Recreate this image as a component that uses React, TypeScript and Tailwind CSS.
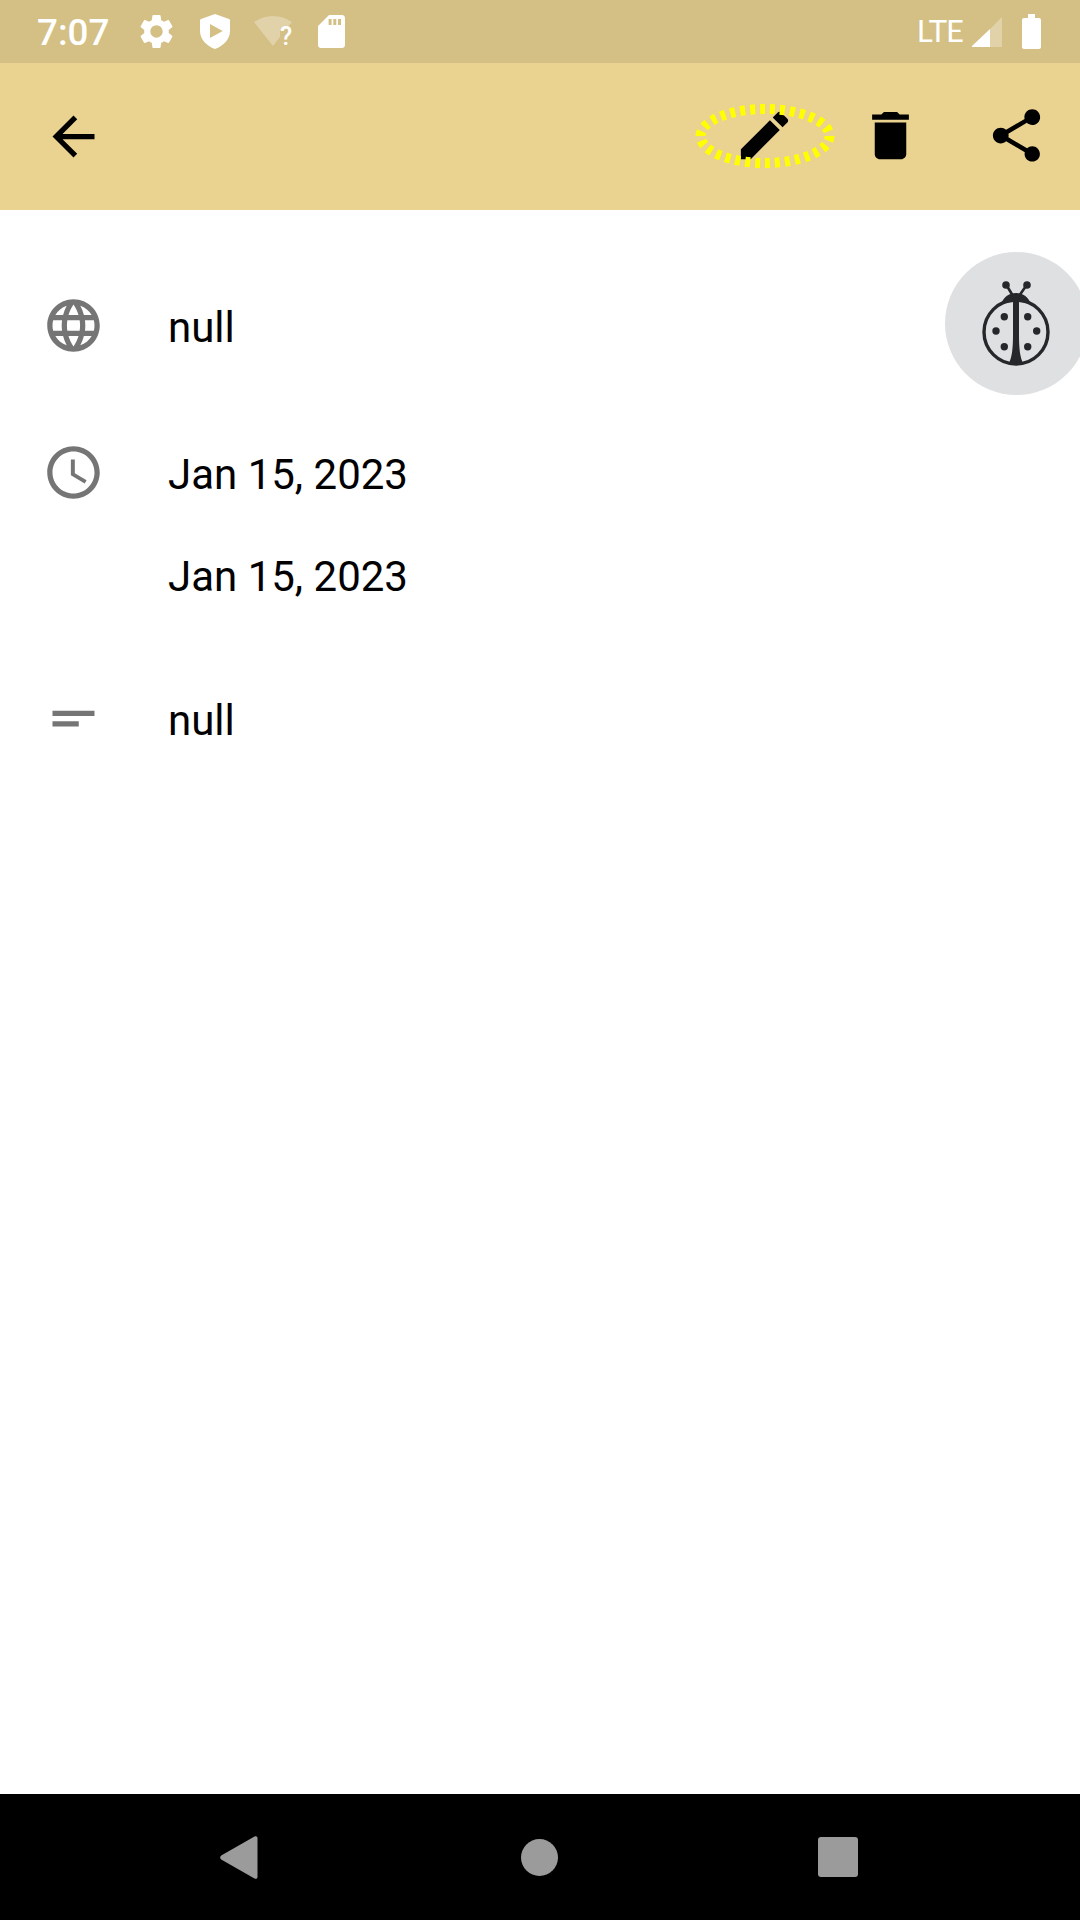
const GRAY = "#757575";

function MI({ d, size = 63, fill = "#000" }: { d: string; size?: number; fill?: string }) {
  return (
    <svg width={size} height={size} viewBox="0 0 24 24" fill={fill} className="block shrink-0">
      <path d={d} />
    </svg>
  );
}

const P = {
  back: "M20 11H7.83l5.59-5.59L12 4l-8 8 8 8 1.41-1.41L7.83 13H20v-2z",
  edit: "M3 17.25V21h3.75L17.81 9.94l-3.75-3.75L3 17.25zM20.71 7.04c.39-.39.39-1.02 0-1.41l-2.34-2.34c-.39-.39-1.02-.39-1.41 0l-1.83 1.83 3.75 3.75 1.83-1.83z",
  trash: "M6 19c0 1.1.9 2 2 2h8c1.1 0 2-.9 2-2V7H6v12zM19 4h-3.5l-1-1h-5l-1 1H5v2h14V4z",
  share: "M18 16.08c-.76 0-1.44.3-1.96.77L8.91 12.7c.05-.23.09-.46.09-.7s-.04-.47-.09-.7l7.05-4.11c.54.5 1.25.81 2.04.81 1.66 0 3-1.34 3-3s-1.34-3-3-3-3 1.34-3 3c0 .24.04.47.09.7L8.04 9.81C7.5 9.31 6.79 9 6 9c-1.66 0-3 1.34-3 3s1.34 3 3 3c.79 0 1.5-.31 2.04-.81l7.12 4.16c-.05.21-.08.43-.08.65 0 1.61 1.31 2.92 2.92 2.92 1.61 0 2.92-1.31 2.92-2.92s-1.31-2.92-2.92-2.92z",
  globe: "M11.99 2C6.47 2 2 6.48 2 12s4.47 10 9.99 10C17.52 22 22 17.52 22 12S17.52 2 11.99 2zm6.93 6h-2.95c-.32-1.25-.78-2.45-1.38-3.56 1.84.63 3.37 1.91 4.33 3.56zM12 4.04c.83 1.2 1.48 2.53 1.91 3.96h-3.82c.43-1.43 1.08-2.76 1.91-3.96zM4.26 14C4.1 13.36 4 12.69 4 12s.1-1.36.26-2h3.38c-.08.66-.14 1.32-.14 2 0 .68.06 1.34.14 2H4.26zm.82 2h2.95c.32 1.25.78 2.45 1.38 3.56-1.84-.63-3.37-1.9-4.33-3.56zm2.95-8H5.08c.96-1.66 2.49-2.93 4.33-3.56C8.81 5.55 8.35 6.75 8.03 8zM12 19.96c-.83-1.2-1.48-2.53-1.91-3.96h3.82c-.43 1.43-1.08 2.76-1.91 3.96zM14.34 14H9.66c-.09-.66-.16-1.32-.16-2 0-.68.07-1.35.16-2h4.68c.09.65.16 1.32.16 2 0 .68-.07 1.34-.16 2zm.25 5.56c.6-1.11 1.06-2.31 1.38-3.56h2.95c-.96 1.65-2.49 2.93-4.33 3.56zM16.36 14c.08-.66.14-1.32.14-2 0-.68-.06-1.34-.14-2h3.38c.16.64.26 1.31.26 2s-.1 1.36-.26 2h-3.38z",
  clock: "M11.99 2C6.47 2 2 6.48 2 12s4.47 10 9.99 10C17.52 22 22 17.52 22 12S17.52 2 11.99 2zM12 20c-4.42 0-8-3.58-8-8s3.58-8 8-8 8 3.58 8 8-3.58 8-8 8zm.5-13H11v6l5.25 3.15.75-1.23-4.5-2.67z",
  subject: "M4 9h16v2H4zm0 4h10v2H4z",
  gear: "M19.14 12.94c.04-.3.06-.61.06-.94 0-.32-.02-.64-.07-.94l2.03-1.58c.18-.14.23-.41.12-.61l-1.92-3.32c-.12-.22-.37-.29-.59-.22l-2.39.96c-.5-.38-1.03-.7-1.62-.94l-.36-2.54c-.04-.24-.24-.41-.48-.41h-3.84c-.24 0-.43.17-.47.41l-.36 2.54c-.59.24-1.13.57-1.62.94l-2.39-.96c-.22-.08-.47 0-.59.22L2.74 8.87c-.12.21-.08.47.12.61l2.03 1.58c-.05.3-.09.63-.09.94s.02.64.07.94l-2.03 1.58c-.18.14-.23.41-.12.61l1.92 3.32c.12.22.37.29.59.22l2.39-.96c.5.38 1.03.7 1.62.94l.36 2.54c.05.24.24.41.48.41h3.84c.24 0 .44-.17.47-.41l.36-2.54c.59-.24 1.13-.56 1.62-.94l2.39.96c.22.08.47 0 .59-.22l1.92-3.32c.12-.22.07-.47-.12-.61l-2.01-1.58zM12 15.6c-1.98 0-3.6-1.62-3.6-3.6s1.62-3.6 3.6-3.6 3.6 1.62 3.6 3.6-1.62 3.6-3.6 3.6z",
};

function StatusBar() {
  return (
    <div className="h-[63px] bg-[#d4bf84] flex items-center shrink-0 relative text-white">
      <span className="ml-[37px] pt-[4px] text-[36.75px] leading-none font-medium font-['Roboto',sans-serif] w-[72px] whitespace-nowrap">7:07</span>
      <div className="ml-[27px]"><MI d={P.gear} size={41} fill="#fff" /></div>
      <svg width="30" height="35" viewBox="0 0 30 35" className="ml-[23px] block shrink-0">
        <path fill="#fff" fillRule="evenodd" d="M15 0 L29 5 C29.6 5.2 30 5.8 30 6.5 V17 C30 25 23.5 32 15 35 C6.5 32 0 25 0 17 V6.5 C0 5.8 0.4 5.2 1 5 Z M10 10 V24 L22.7 17 Z" />
      </svg>
      <svg width="42" height="32" viewBox="0 0 42 32" className="ml-[24px] block shrink-0 overflow-visible">
        <path fill="#fff" fillOpacity="0.3" d="M0 6 C6 2 12 0 19 0 C26 0 32 2 38 6 L31 14 H26 V21 L19 30 Z" />
        <text x="26" y="29" fill="#fff" fontSize="25" fontWeight="500" fontFamily="Roboto, sans-serif">?</text>
      </svg>
      <svg width="27" height="33" viewBox="0 0 27 33" className="ml-[22px] block shrink-0">
        <path fill="#fff" fillRule="evenodd" d="M11 0 H24 C25.7 0 27 1.3 27 3 V30 C27 31.7 25.7 33 24 33 H3 C1.3 33 0 31.7 0 30 V11 Z M10.6 4 V10 H13.6 V4 Z M15.3 4 V10 H18.3 V4 Z M20 4 V10 H23 V4 Z" />
      </svg>
      <div className="ml-auto flex items-center">
        <span className="text-[31px] pb-[2px] leading-none font-['Lato',sans-serif] font-normal tracking-[-1px]">LTE</span>
        <svg width="32" height="32" viewBox="0 0 32 32" className="ml-[8px] block shrink-0">
          <path fill="#fff" fillOpacity="0.3" d="M31 1 V30 C31 30.6 30.6 31 30 31 H19 V13 Z" />
          <path fill="#fff" d="M19 13 V31 H1.5 C1 31 0.5 30.5 1 30 Z" />
        </svg>
        <svg width="19" height="35" viewBox="0 0 19 35" className="ml-[19px] mr-[39px] block shrink-0">
          <path fill="#fff" d="M6 0 H13 V4 H17 C18.1 4 19 4.9 19 6 V33 C19 34.1 18.1 35 17 35 H2 C0.9 35 0 34.1 0 33 V6 C0 4.9 0.9 4 2 4 H6 Z" />
        </svg>
      </div>
    </div>
  );
}

function Toolbar() {
  return (
    <div className="h-[147px] bg-[#ead290] flex items-center shrink-0 pr-[1px] pl-[11px] pb-[2px]">
      <button className="w-[126px] h-[126px] flex items-center justify-center pt-[2px] pr-[2px]"><MI d={P.back} /></button>
      <div className="flex-1" />
      <button className="w-[126px] h-[126px] flex items-center justify-center relative">
        <MI d={P.edit} />
        <svg width="144" height="72" viewBox="0 0 144 72" className="absolute left-[-8.5px] top-[27.5px] pointer-events-none">
          <ellipse cx="72" cy="36" rx="64.5" ry="27" fill="none" stroke="#ffff00" strokeWidth="10" strokeDasharray="5 5" pathLength={300} />
        </svg>
      </button>
      <button className="w-[126px] h-[126px] flex items-center justify-center"><MI d={P.trash} /></button>
      <button className="w-[126px] h-[126px] flex items-center justify-center"><MI d={P.share} /></button>
    </div>
  );
}

function Row({ icon, lines, className }: { icon: string; lines: string[]; className?: string }) {
  return (
    <div className={"flex items-start pl-[42px] " + (className ?? "")}>
      <div className="w-[126px] shrink-0"><MI d={icon} fill={GRAY} /></div>
      <div className="flex flex-col gap-[42px]">
        {lines.map((l, i) => (
          <div key={i} className="h-[60px] pt-[7px] flex items-center text-[42px] leading-none text-black font-['Roboto',sans-serif]">{l}</div>
        ))}
      </div>
    </div>
  );
}

function Ladybug() {
  return (
    <div className="absolute left-[945px] top-[252px] w-[143px] h-[143px] rounded-full bg-[#dfe0e2] flex items-center justify-center">
      <svg width="80" height="90" viewBox="0 0 80 90" className="block ml-[-1px] mt-[3px]">
        <g fill="#25272a">
          <path d="M25 25 C27 17 33 13 40 13 C47 13 53 17 55 25 C50 21 30 21 25 25 Z" />
          <path d="M37 16 L31 6 M43 16 L50 6" stroke="#25272a" strokeWidth="2.6" fill="none" />
          <circle cx="30" cy="5" r="3.8" />
          <circle cx="51" cy="5" r="3.8" />
          <path d="M37 20 H43 V55 C43 68 44 78 47.5 84 H32.5 C36 78 37 68 37 55 Z" />
          <circle cx="28.3" cy="36.7" r="3.7" />
          <circle cx="51.7" cy="36.7" r="3.7" />
          <circle cx="20" cy="51" r="3.7" />
          <circle cx="60.7" cy="51" r="3.7" />
          <circle cx="28.3" cy="66.7" r="3.7" />
          <circle cx="51.7" cy="66.7" r="3.7" />
        </g>
        <circle cx="40" cy="52" r="32" fill="none" stroke="#25272a" strokeWidth="3.4" />
      </svg>
    </div>
  );
}

function NavBar() {
  return (
    <div className="h-[126px] bg-black shrink-0 flex items-center relative pl-[220px] pr-[222px] justify-between">
      <svg width="38" height="43" viewBox="0 0 38 43" className="block">
        <path fill="#9b9b9b" d="M34.5 0.6 C36 -0.4 37.5 0.4 37.5 2 V41 C37.5 42.6 36 43.4 34.5 42.4 L1.2 23.5 C-0.2 22.5 -0.2 20.5 1.2 19.5 Z" />
      </svg>
      <div className="w-[37px] h-[37px] rounded-full bg-[#9b9b9b] ml-[2px]" />
      <div className="w-[40px] h-[40px] rounded-[3px] bg-[#9b9b9b]" />
    </div>
  );
}

export default function App() {
  return (
    <div className="relative w-[1080px] h-[1920px] flex flex-col bg-white overflow-hidden">
      <StatusBar />
      <Toolbar />
      <div className="flex-1 flex flex-col pt-[84px]">
        <Row icon={P.globe} lines={["null"]} />
        <Row icon={P.clock} lines={["Jan 15, 2023", "Jan 15, 2023"]} className="mt-[84px]" />
        <Row icon={P.subject} lines={["null"]} className="mt-[84px]" />
      </div>
      <Ladybug />
      <NavBar />
    </div>
  );
}
